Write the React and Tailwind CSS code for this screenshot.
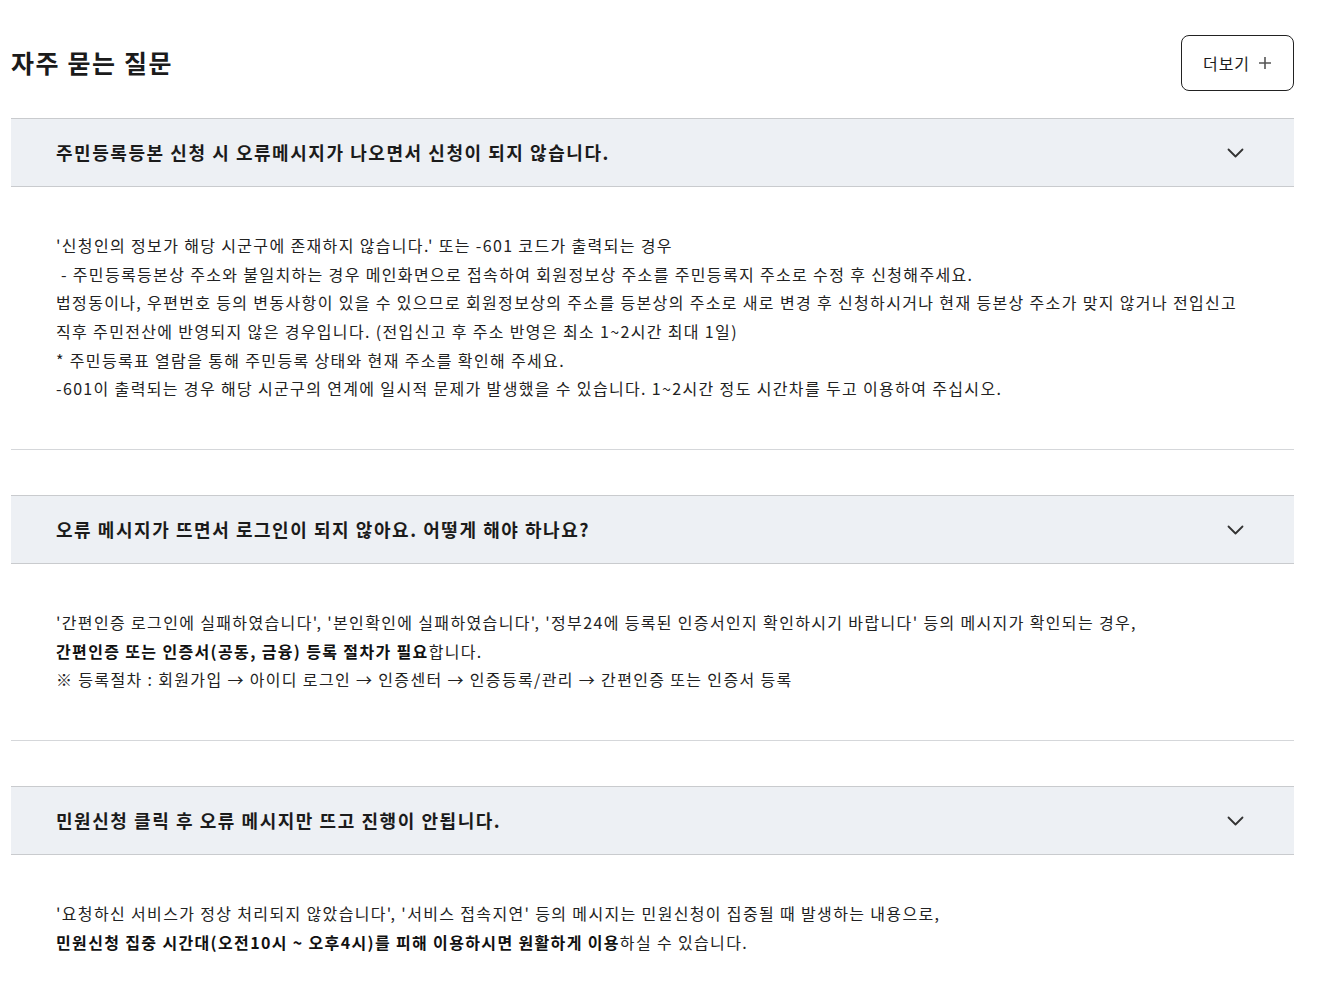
import { useState } from "react";

const faqs = [
  {
    q: "주민등록등본 신청 시 오류메시지가 나오면서 신청이 되지 않습니다.",
    a: [
      [{ t: "'신청인의 정보가 해당 시군구에 존재하지 않습니다.' 또는 -601 코드가 출력되는 경우" }],
      [{ t: "\u00a0- 주민등록등본상 주소와 불일치하는 경우 메인화면으로 접속하여 회원정보상 주소를 주민등록지 주소로 수정 후 신청해주세요." }],
      [{ t: "법정동이나, 우편번호 등의 변동사항이 있을 수 있으므로 회원정보상의 주소를 등본상의 주소로 새로 변경 후 신청하시거나 현재 등본상 주소가 맞지 않거나 전입신고" }],
      [{ t: "직후 주민전산에 반영되지 않은 경우입니다. (전입신고 후 주소 반영은 최소 1~2시간 최대 1일)" }],
      [{ t: "* 주민등록표 열람을 통해 주민등록 상태와 현재 주소를 확인해 주세요." }],
      [{ t: "-601이 출력되는 경우 해당 시군구의 연계에 일시적 문제가 발생했을 수 있습니다. 1~2시간 정도 시간차를 두고 이용하여 주십시오." }],
    ],
  },
  {
    q: "오류 메시지가 뜨면서 로그인이 되지 않아요. 어떻게 해야 하나요?",
    a: [
      [{ t: "'간편인증 로그인에 실패하였습니다', '본인확인에 실패하였습니다', '정부24에 등록된 인증서인지 확인하시기 바랍니다' 등의 메시지가 확인되는 경우," }],
      [{ t: "간편인증 또는 인증서(공동, 금융) 등록 절차가 필요", b: true }, { t: "합니다." }],
      [{ t: "※ 등록절차 : 회원가입 → 아이디 로그인 → 인증센터 → 인증등록/관리 → 간편인증 또는 인증서 등록" }],
    ],
  },
  {
    q: "민원신청 클릭 후 오류 메시지만 뜨고 진행이 안됩니다.",
    a: [
      [{ t: "'요청하신 서비스가 정상 처리되지 않았습니다', '서비스 접속지연' 등의 메시지는 민원신청이 집중될 때 발생하는 내용으로," }],
      [{ t: "민원신청 집중 시간대(오전10시 ~ 오후4시)를 피해 이용하시면 원활하게 이용", b: true }, { t: "하실 수 있습니다." }],
    ],
  },
];

function Chevron({ open }) {
  return (
    <svg
      width="17"
      height="10"
      viewBox="0 0 17 10"
      fill="none"
      className={open ? "" : "rotate-180"}
    >
      <polyline points="1.5,1.5 8.5,8.5 15.5,1.5" stroke="#333333" strokeWidth="1.8" strokeLinecap="round" strokeLinejoin="round" />
    </svg>
  );
}

function FaqItem({ item }) {
  const [open, setOpen] = useState(true);
  return (
    <div>
      <button
        onClick={() => setOpen(!open)}
        className="w-full h-[69px] flex items-center justify-between pl-[45px] pr-[50px] bg-[#edf0f4] border-y border-[#c9cbce] text-left"
      >
        <span className="text-[18px] font-bold text-[#1b1b1b] tracking-[1.55px]">{item.q}</span>
        <Chevron open={open} />
      </button>
      {open && (
        <div className="pl-[45px] pr-[20px] pt-[44px] pb-[46px] border-b border-[#d5d7da] text-[16px] leading-[28.67px] text-[#222222] tracking-[1.35px]">
          {item.a.map((line, i) => (
            <p key={i} className="whitespace-nowrap">
              {line.map((seg, j) =>
                seg.b ? (
                  <strong key={j} className="font-bold text-[#111111]">{seg.t}</strong>
                ) : (
                  <span key={j}>{seg.t}</span>
                )
              )}
            </p>
          ))}
        </div>
      )}
    </div>
  );
}

export default function App() {
  return (
    <div
      className="min-h-screen bg-white pt-[35px] pl-[11px]"
      style={{ fontFamily: '"Noto Sans CJK KR", "Noto Sans", sans-serif' }}
    >
      <div className="w-[1283px]">
        <div className="flex items-center justify-between h-[56px]">
          <h2 className="text-[25px] font-bold text-[#1b1b1b] tracking-[1.6px]">자주 묻는 질문</h2>
          <button className="w-[113px] h-[56px] border border-[#222222] rounded-[8px] flex items-center justify-center gap-[8px] text-[16px] text-[#1b1b1b]">
            <span className="tracking-[1px]">더보기</span>
            <svg width="14" height="14" viewBox="0 0 14 14" fill="none">
              <path d="M7 1v12M1 7h12" stroke="#555555" strokeWidth="1.6" />
            </svg>
          </button>
        </div>
        <div className="mt-[27px] flex flex-col gap-[45px]">
          {faqs.map((item, i) => (
            <FaqItem key={i} item={item} />
          ))}
        </div>
      </div>
    </div>
  );
}
